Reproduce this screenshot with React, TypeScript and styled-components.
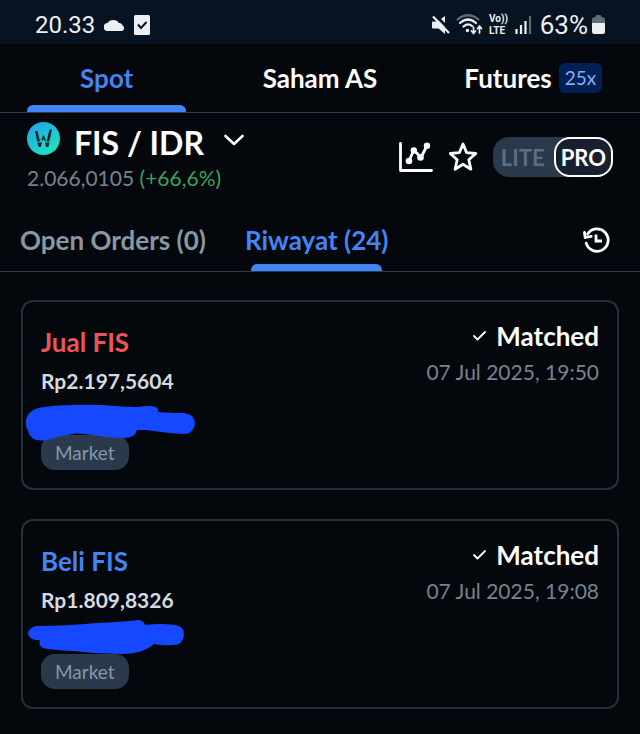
import React from "react";
import styled, { createGlobalStyle } from "styled-components";

const Global = createGlobalStyle`
  * { box-sizing: border-box; }
  body { margin: 0; background: #04070c; color: #fff; font-family: Lato, "Open Sans", sans-serif; }
  button { font: inherit; color: inherit; background: none; border: 0; padding: 0; margin: 0; cursor: pointer; }
  svg { display: block; flex: none; }
  h1, h2, p { margin: 0; }
`;

const Page = styled.div`
  min-height: 100vh;
  background: #04070c;
`;

const StatusBar = styled.header`
  display: flex;
  align-items: center;
  justify-content: space-between;
  height: 44px;
  padding: 5px 35px 0;
  background: #081322;
  color: #eceff3;
  font: 400 24px/32px Roboto, sans-serif;
`;

const StatusGroup = styled.div<{ $gap: number }>`
  display: flex;
  align-items: center;
  gap: ${(p) => p.$gap}px;
`;

const Battery = styled.div`
  display: flex;
  align-items: center;
  gap: 4px;
  padding-left: 2px;
  font-size: 26px;
`;

const MarketTabs = styled.nav`
  display: grid;
  grid-template-columns: repeat(3, 1fr);
  height: 69px;
  border-bottom: 1px solid #2b3b4a;
`;

const MarketTab = styled.button<{ $active?: boolean }>`
  position: relative;
  display: flex;
  align-items: center;
  justify-content: center;
  gap: 7px;
  font-size: 26px;
  line-height: 32px;
  font-weight: 700;
  color: ${(p) => (p.$active ? "#4285f4" : "#fff")};
`;

const Underline = styled.span<{ $inset: number }>`
  position: absolute;
  left: ${(p) => p.$inset}px;
  right: ${(p) => p.$inset}px;
  bottom: 0;
  height: 7px;
  border-radius: 6px 6px 0 0;
  background: #4285f4;
`;

const Leverage = styled.span`
  padding: 0 6px;
  border-radius: 6px;
  background: #021f56;
  color: #81b1f5;
  font-size: 19px;
  line-height: 30px;
  font-weight: 400;
`;

const PairBar = styled.section`
  display: flex;
  justify-content: space-between;
  align-items: center;
  padding: 8px 27px 0;
`;

const PairButton = styled.button`
  display: flex;
  align-items: center;
  gap: 14px;
  height: 44px;
`;

const PairName = styled.h1`
  font-size: 32px;
  line-height: 44px;
  font-weight: 700;
  margin-right: 6px;
`;

const LogoWrap = styled.span`
  padding-bottom: 10px;
`;

const ChevronWrap = styled.span`
  padding-bottom: 4px;
`;

const Price = styled.p`
  font-size: 21px;
  line-height: 26px;
  color: #75838f;
`;

const Gain = styled.span`
  color: #35a45b;
`;

const Actions = styled.div`
  display: flex;
  align-items: center;
  gap: 15px;
  padding-top: 2px;
`;

const ModeSwitch = styled.div`
  display: flex;
  height: 40px;
  border-radius: 16px;
  background: #2a394b;
`;

const Mode = styled.button<{ $active?: boolean }>`
  padding: ${(p) => (p.$active ? "0 5px" : "0 9px 0 8px")};
  border: ${(p) => (p.$active ? "2px solid #fff" : "0")};
  border-radius: 16px;
  background: ${(p) => (p.$active ? "#18202f" : "transparent")};
  color: ${(p) => (p.$active ? "#fff" : "#5c6f80")};
  font-size: 22px;
  font-weight: 700;
`;

const OrderTabs = styled.nav`
  display: flex;
  align-items: center;
  gap: 39px;
  height: 81px;
  padding: 0 29px 0 20px;
  border-bottom: 1px solid #2b3b4a;
`;

const OrderTab = styled.button<{ $active?: boolean }>`
  position: relative;
  height: 80px;
  padding-top: 18px;
  font-size: 26px;
  line-height: 32px;
  font-weight: 700;
  white-space: nowrap;
  color: ${(p) => (p.$active ? "#4285f4" : "#8698a4")};
`;

const HistoryButton = styled.button`
  margin-left: auto;
  padding-top: 18px;
`;

const OrderList = styled.main`
  display: grid;
  gap: 29px;
  padding: 28px 21px 24px;
`;

const Card = styled.article`
  display: flex;
  justify-content: space-between;
  padding: 20px 18px 18px;
  border: 2px solid #242f3c;
  border-radius: 12px;
`;

const OrderInfo = styled.div`
  position: relative;
`;

const OrderTitle = styled.h2<{ $side: "sell" | "buy" }>`
  font-size: 26px;
  line-height: 40px;
  font-weight: 700;
  color: ${(p) => (p.$side === "sell" ? "#ed5554" : "#4285f4")};
`;

const OrderPrice = styled.p`
  font-size: 21px;
  line-height: 38px;
  font-weight: 700;
  color: #d5dae0;
`;

const OrderType = styled.span`
  display: inline-block;
  margin-top: 35px;
  padding: 0 14px;
  border-radius: 14px;
  background: #2a394b;
  color: #8796a8;
  font-size: 19px;
  line-height: 35px;
`;

const Scribble = styled.svg`
  position: absolute;
  left: -21px;
  top: 75px;
`;

const OrderStatus = styled.div`
  text-align: right;
  margin-top: -4px;
`;

const Matched = styled.p`
  display: flex;
  align-items: center;
  justify-content: flex-end;
  gap: 10px;
  font-size: 26px;
  line-height: 36px;
  font-weight: 700;
`;

const OrderDate = styled.time`
  display: block;
  font-size: 21px;
  line-height: 36px;
  color: #75838f;
`;

type Order = {
  side: "sell" | "buy";
  title: string;
  price: string;
  date: string;
  iso: string;
  mask: string;
};

const orders: Order[] = [
  {
    side: "sell",
    title: "Jual FIS",
    price: "Rp2.197,5604",
    date: "07 Jul 2025, 19:50",
    iso: "2025-07-07T19:50",
    mask: "M18 7C32 4 60 3 80 4C95 5 108 6 118 6Q130 4 136 6Q139 8 138 11Q149 12 165 12Q175 14 175 23Q173 33 164 33Q146 32 126 29L117 29Q115 37 104 37C80 37 65 31 53 33Q39 35 27 39Q11 42 8 30Q5 25 6 19Q8 10 18 7Z",
  },
  {
    side: "buy",
    title: "Beli FIS",
    price: "Rp1.809,8326",
    date: "07 Jul 2025, 19:08",
    iso: "2025-07-07T19:08",
    mask: "M16 6Q48 6 76 3Q100 2 119 0Q124 1 125 5Q141 3 155 5Q164 6 164 15Q163 25 153 25Q142 26 134 24Q123 34 101 34Q77 34 53 31Q31 30 23 28Q18 25 20 20L15 20Q8 18 8 13Q9 8 16 6Z",
  },
];

const stroke = {
  fill: "none",
  stroke: "currentColor",
  strokeLinecap: "round" as const,
  strokeLinejoin: "round" as const,
};

function StatusIcons() {
  return (
    <>
      <svg width="18" height="20" viewBox="0 0 18 20" aria-label="Muted">
        <path d="M1 6.500h4.500L13 1v18l-6.500-5.500H1q-1 0-1-1v-5q0-1 1-1z" fill="currentColor" />
        <path d="M2-1 19 16" stroke="#081322" strokeWidth="3" />
        <path d="M1 1.500 17 18" stroke="currentColor" strokeWidth="2.200" />
      </svg>
      <svg width="27" height="21" viewBox="0 0 27 21" aria-label="Wi-Fi">
        <g {...stroke} strokeWidth="2.200">
          <path d="M1.500 5.500Q12 -3 22.500 5.500" stroke="#626a75" />
          <path d="M4 9Q12 2 20 9" />
          <path d="M7.500 12.500Q12 8.500 16 12" />
        </g>
        <circle cx="11.500" cy="16.500" r="1.700" fill="currentColor" />
        <path d="M17.500 13v6m-2-2L17.500 19.500l2-2.500M23.500 19V12.500M21.500 14.500l2-2.500 2 2.500" {...stroke} strokeWidth="1.700" />
      </svg>
      <svg width="20" height="24" viewBox="0 0 20 24" aria-label="VoLTE">
        <g fill="currentColor" fontFamily="Roboto, sans-serif" fontWeight="700">
          <text x="0" y="9" fontSize="10">Vo))</text>
          <text x="0" y="21" fontSize="10">LTE</text>
        </g>
      </svg>
      <svg width="17" height="18" viewBox="0 0 17 18" aria-label="Signal">
        <path d="M1.500 13v5M6 9v9M10.500 5v13" stroke="currentColor" strokeWidth="2.200" />
        <path d="M15 0v18" stroke="#626a75" strokeWidth="2.200" />
      </svg>
    </>
  );
}

export default function App() {
  return (
    <Page>
      <Global />
      <StatusBar>
        <StatusGroup $gap={9}>
          <span>20.33</span>
          <svg width="21" height="13" viewBox="0 0 21 13" aria-label="Cloud">
            <path d="M4 13a4 4 0 0 1-.5-8 6.500 5.500 0 0 1 11.500 0c2.500 0 3.500 1.500 3.500 2.500A3 3 0 0 1 18 13z" fill="currentColor" />
          </svg>
          <svg width="16" height="20" viewBox="0 0 16 20" aria-label="Task done">
            <rect width="16" height="20" rx="1.500" fill="currentColor" />
            <path d="m4 9.500 3 3.500 5.500-6" fill="none" stroke="#081322" strokeWidth="2" />
          </svg>
        </StatusGroup>
        <StatusGroup $gap={6}>
          <StatusIcons />
          <Battery>
            <span>63%</span>
            <svg width="13" height="19" viewBox="0 0 13 19" aria-label="Battery">
              <path d="M3.500 2V1.500Q3.500 0 5 0h3Q9.500 0 9.500 1.500V2Q13 2 13 4.500V8H0V4.500Q0 2 3.500 2z" fill="#626a75" />
              <path d="M0 8h13v8.500Q13 19 10.500 19h-8Q0 19 0 16.500z" fill="currentColor" />
            </svg>
          </Battery>
        </StatusGroup>
      </StatusBar>

      <MarketTabs aria-label="Market">
        <MarketTab $active>
          Spot
          <Underline $inset={27} />
        </MarketTab>
        <MarketTab>Saham AS</MarketTab>
        <MarketTab>
          Futures <Leverage>25x</Leverage>
        </MarketTab>
      </MarketTabs>

      <PairBar>
        <div>
          <PairButton>
            <LogoWrap>
              <svg width="33" height="33" viewBox="0 0 33 33" aria-hidden="true">
                <defs>
                  <linearGradient id="coin" x1="0" y1="0" x2="0.7" y2="1">
                    <stop offset="0" stopColor="#1ea0ee" />
                    <stop offset="1" stopColor="#20e2bc" />
                  </linearGradient>
                </defs>
                <circle cx="16.500" cy="16.500" r="16.500" fill="url(#coin)" />
                <g fill="#07252e">
                  <path d="M8 9h2.500l2.500 10.500h-2.800zM25 7.500h-2.500l-3 12h2.800zM16.500 12.500l2.600 6h-1.800l-.8-2-.8 2h-1.800z" />
                  <path d="M10.500 20.500h4.500l-1.200 4.500h-2.200zM18 20.500h4.500l-1.200 4.500h-2.200z" />
                </g>
              </svg>
            </LogoWrap>
            <PairName>FIS / IDR</PairName>
            <ChevronWrap>
              <svg width="20" height="18" viewBox="0 0 20 18" aria-hidden="true">
                <path d="m1.500 4 8.500 8 8.500-8" {...stroke} strokeWidth="2.600" />
              </svg>
            </ChevronWrap>
          </PairButton>
          <Price>
            2.066,0105 <Gain>(+66,6%)</Gain>
          </Price>
        </div>
        <Actions>
          <button aria-label="Chart">
            <svg width="35" height="31" viewBox="0 0 35 31">
              <path d="M1.500 1.500V28.500H32.500" {...stroke} strokeWidth="2.800" />
              <path d="m10 19 4.800-11 7.200 7.500 6-12" {...stroke} strokeWidth="2.800" />
              <g fill="currentColor">
                <circle cx="10" cy="19" r="3.300" />
                <circle cx="14.800" cy="8.500" r="3.200" />
                <circle cx="21.500" cy="15.500" r="3.300" />
                <circle cx="28" cy="3.700" r="3.200" />
              </g>
            </svg>
          </button>
          <button aria-label="Favorite">
            <svg width="29" height="30" viewBox="0 0 29 30">
              <path d="m14 2 3.600 8.600 9.200.9-7 6.200 2.100 9.500-7.900-5-7.900 5 2.100-9.500-7-6.200 9.200-.9z" {...stroke} strokeWidth="2.800" />
            </svg>
          </button>
          <ModeSwitch>
            <Mode>LITE</Mode>
            <Mode $active>PRO</Mode>
          </ModeSwitch>
        </Actions>
      </PairBar>

      <OrderTabs aria-label="Orders">
        <OrderTab>Open Orders (0)</OrderTab>
        <OrderTab $active>
          Riwayat (24)
          <Underline $inset={6} />
        </OrderTab>
        <HistoryButton aria-label="History">
          <svg width="28" height="26" viewBox="0 0 28 26">
            <path d="M3.200 16.200A11.200 11.200 0 1 0 4.600 7" {...stroke} strokeWidth="2.800" />
            <path d="m1.500 5.500.7 5 6-1.200" {...stroke} strokeWidth="2.800" />
            <path d="M13 7.500v6.500h6" fill="none" stroke="currentColor" strokeWidth="2.800" />
          </svg>
        </HistoryButton>
      </OrderTabs>

      <OrderList>
        {orders.map((order) => (
          <Card key={order.iso}>
            <OrderInfo>
              <OrderTitle $side={order.side}>{order.title}</OrderTitle>
              <OrderPrice>{order.price}</OrderPrice>
              <OrderType>Market</OrderType>
              <Scribble width="180" height="44" viewBox="0 -4 180 44" aria-hidden="true">
                <path d={order.mask} fill="#1648ff" />
              </Scribble>
            </OrderInfo>
            <OrderStatus>
              <Matched>
                <svg width="13" height="10" viewBox="0 0 13 10" aria-hidden="true">
                  <path d="m1 5 3.500 3.500L12 1" {...stroke} strokeWidth="1.800" />
                </svg>
                Matched
              </Matched>
              <OrderDate dateTime={order.iso}>{order.date}</OrderDate>
            </OrderStatus>
          </Card>
        ))}
      </OrderList>
    </Page>
  );
}
